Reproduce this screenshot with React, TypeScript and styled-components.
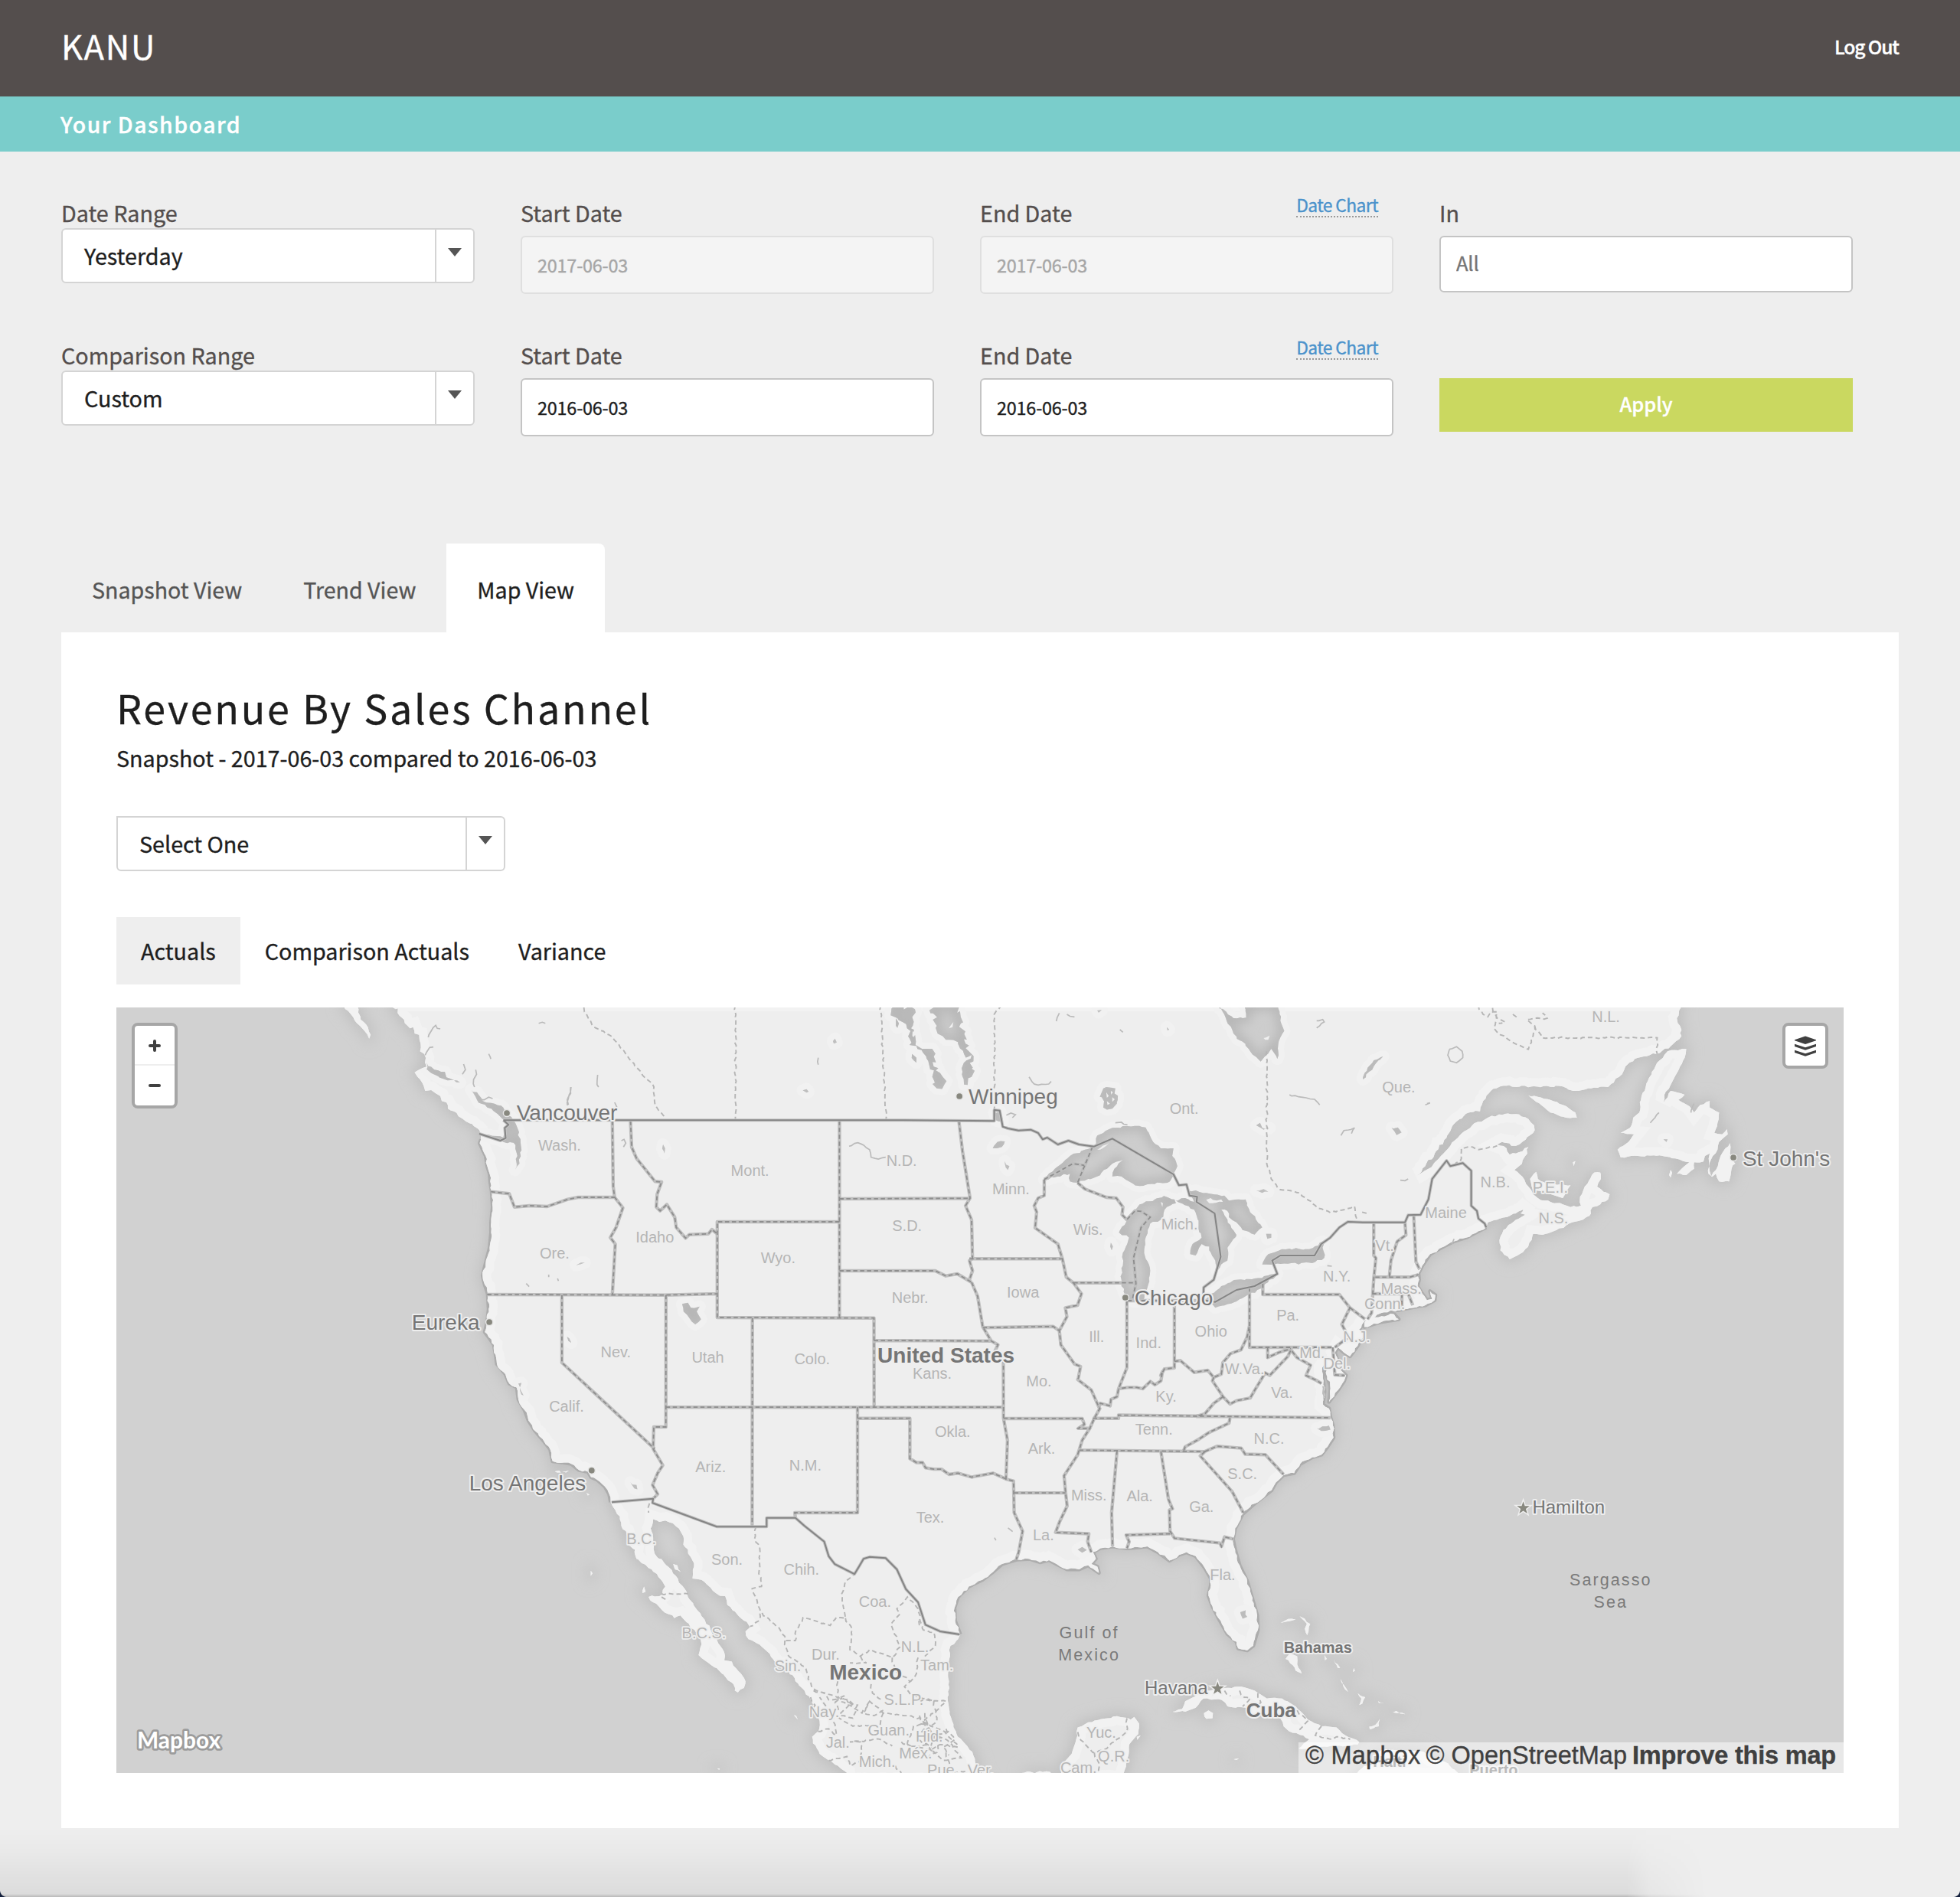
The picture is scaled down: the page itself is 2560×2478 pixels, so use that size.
import React from "react";
import styled, { createGlobalStyle, css } from "styled-components";

const GlobalStyle = createGlobalStyle`
  * { box-sizing: border-box; }
  body {
    margin: 0;
    background: #eeeeee;
    font-family: "Noto Sans CJK JP", "Noto Sans CJK SC", "Open Sans", sans-serif;
    font-size: 28.7px;
    color: #1e1e1e;
  }
`;

/* ---------- page chrome ---------- */

const Page = styled.div`
  position: relative;
  width: 2560px;
  height: 2478px;
  overflow: hidden;
  background: #eeeeee;
  -webkit-text-stroke: 0.35px currentColor;
`;

const Header = styled.header`
  display: flex;
  align-items: center;
  justify-content: space-between;
  height: 126px;
  padding: 0 80px 6px;
  background: #544e4d;
  color: #fff;
`;

const Brand = styled.div`
  font-size: 43.5px;
  letter-spacing: 1.8px;
  line-height: 60px;
`;

const LogOut = styled.a`
  font-size: 24.6px;
  font-weight: 500;
  letter-spacing: -1.1px;
  line-height: 40px;
`;

const TitleBar = styled.div`
  display: flex;
  align-items: center;
  height: 72px;
  padding: 0 79px 2px;
  background: #7acdcb;
  color: #fff;
  font-size: 28.4px;
  font-weight: 500;
  letter-spacing: 1.5px;
`;

/* ---------- filters ---------- */

const Filters = styled.form`
  display: grid;
  grid-template-columns: repeat(4, 540px);
  grid-auto-rows: 186px;
  column-gap: 60px;
  padding: 60px 80px 80px;
`;

const Field = styled.div`
  display: flex;
  flex-direction: column;
`;

const LabelRow = styled.div`
  display: flex;
  justify-content: space-between;
  align-items: flex-start;
  height: 40px;
  padding-right: 20px;
  line-height: 40px;
  color: #544e4d;
`;

const ChartLink = styled.a`
  margin-top: -6px;
  padding-top: 2px;
  line-height: 28px;
  font-size: 22.8px;
  letter-spacing: -0.6px;
  color: #4b92cb;
  border-bottom: 2px dotted #999;
`;

const SelectBox = styled.div<{ $width: number; $square?: boolean }>`
  display: flex;
  width: ${(p) => p.$width}px;
  height: 72px;
  border: 2px solid #d4d4d4;
  border-radius: ${(p) => (p.$square ? "0 6px 6px 6px" : "6px")};
  background: #fff;
`;

const SelectValue = styled.span`
  flex: 1;
  padding-left: 28px;
  line-height: 68px;
`;

const SelectArrow = styled.span`
  width: 50px;
  border-left: 2px solid #d4d4d4;
  padding: 24px 0 0 15px;
  &::before {
    content: "";
    display: block;
    width: 0;
    height: 0;
    border: 9.5px solid transparent;
    border-top: 11px solid #555;
    border-bottom: 0;
  }
`;

const TextInput = styled.input<{ $tall?: boolean }>`
  width: 100%;
  height: 76px;
  margin: 10px 0 0;
  padding: 0 20px;
  border: 2px solid #c4c4c4;
  border-radius: 6px;
  background: #fff;
  color: #1e1e1e;
  font-family: inherit;
  font-size: 23.4px;
  letter-spacing: -0.2px;
  &:disabled {
    background: #f4f4f4;
    border-color: #dfdfdf;
    color: #a6a6a6;
  }
  &::placeholder {
    color: #757575;
    opacity: 1;
  }
  ${(p) =>
    p.$tall &&
    css`
      height: 74px;
      padding-bottom: 5px;
      font-size: 25.6px;
    `}
`;

const ApplyButton = styled.button`
  height: 70px;
  margin-top: 50px;
  padding: 0 0 4px;
  border: 0;
  background: #cad860;
  color: #fff;
  font-family: inherit;
  font-size: 25.4px;
  font-weight: 500;
`;

/* ---------- tabs and panel ---------- */

const Tabs = styled.nav`
  display: flex;
  margin: 0 80px;
  height: 116px;
`;

const Tab = styled.a<{ $active?: boolean }>`
  padding: 3px 40px 0;
  line-height: 113px;
  font-size: 28.6px;
  color: ${(p) => (p.$active ? "#1e1e1e" : "#555")};
  background: ${(p) => (p.$active ? "#fff" : "transparent")};
  border-top-right-radius: 8px;
`;

const Panel = styled.section`
  margin: 0 80px;
  padding: 60px 72px 72px;
  background: #fff;
`;

const Heading = styled.h1`
  margin: 0;
  font-size: 52px;
  font-weight: 400;
  line-height: 76px;
  letter-spacing: 2.75px;
`;

const SubHeading = styled.p`
  margin: 8px 0 56px;
  line-height: 40px;
`;

const SubTabs = styled.div`
  display: flex;
  margin: 60px 0 30px;
`;

const SubTab = styled.a<{ $active?: boolean }>`
  padding: 0 32px;
  line-height: 88px;
  background: ${(p) => (p.$active ? "#eeeeee" : "transparent")};
`;

const BottomShade = styled.div`
  position: absolute;
  left: 0;
  bottom: 0;
  width: 2240px;
  height: 90px;
  background: linear-gradient(
    to bottom,
    rgba(0, 0, 0, 0) 0,
    rgba(0, 0, 0, 0.018) 30px,
    rgba(0, 0, 0, 0.075) 86px,
    rgba(0, 0, 0, 0.22) 90px
  );
  mask-image: linear-gradient(to right, #000 2125px, rgba(0, 0, 0, 0.4) 2155px, transparent 2230px);
`;

const Corner = styled.i<{ $side: "left" | "right" }>`
  position: absolute;
  bottom: 0;
  ${(p) => p.$side}: 0;
  width: 9px;
  height: 9px;
  background: radial-gradient(
    circle at ${(p) => (p.$side === "left" ? "100%" : "0%")} 0%,
    transparent 8.5px,
    #14203c 9.5px
  );
`;

/* ---------- map ---------- */

const MapFrame = styled.div`
  position: relative;
  width: 2256px;
  height: 1000px;
  background: #d1d1d1;
  overflow: hidden;
  font-family: "Liberation Sans", Arial, sans-serif;
`;

const MapSvg = styled.svg`
  display: block;
  -webkit-text-stroke: initial;
`;

const Control = styled.div<{ $side: "left" | "right" }>`
  position: absolute;
  top: 20px;
  ${(p) => p.$side}: 20px;
  width: 60px;
  border: 4px solid #a6a6a6;
  border-radius: 8px;
  background: #fff;
  overflow: hidden;
`;

const ControlButton = styled.div`
  display: flex;
  align-items: center;
  justify-content: center;
  height: 52px;
  &:not(:last-child) {
    border-bottom: 2px solid #eee;
    padding-top: 2px;
  }
`;

const Attribution = styled.div`
  position: absolute;
  right: 0;
  bottom: 0;
  display: flex;
  gap: 7px;
  width: 712px;
  height: 40px;
  padding-left: 9px;
  line-height: 34px;
  white-space: nowrap;
  background: rgba(255, 255, 255, 0.5);
  color: #404040;
  font-size: 32.5px;
`;

const AttributionLink = styled.a<{ $bold?: boolean; $track: number }>`
  font-weight: ${(p) => (p.$bold ? 700 : 400)};
  letter-spacing: ${(p) => p.$track}px;
`;

type Pt = [number, number];

/* Survey sheets: each has its own origin and units per pixel. */
const sheets = {
  A: [150, 1310, 2.529, 3],
  B: [600, 1310, 2.613, 3],
  C: [1180, 1310, 2.529, 3],
  D: [1780, 1310, 2.45, 3],
  E: [600, 1790, 2.529, 2.904],
  F: [1200, 1790, 2.529, 2.904],
  G: [1680, 1900, 2.119, 3],
} as const;
type Sheet = keyof typeof sheets;

const at = (s: Sheet, x: number, y: number): Pt => {
  const [ox, oy, sx, sy] = sheets[s];
  return [ox + x / sx - 152, oy + y / sy - 1316];
};

/* "B 10,20 30,40 C 5,6" -> map points; a letter switches the sheet. */
const trace = (src: string): Pt[] => {
  let sheet: Sheet = "A";
  const out: Pt[] = [];
  src
    .trim()
    .split(/\s+/)
    .forEach((tok) => {
      if (tok in sheets) sheet = tok as Sheet;
      else {
        const [x, y] = tok.split(",").map(Number);
        out.push(at(sheet, x, y));
      }
    });
  return out;
};

/* Deterministic small-scale wobble for natural shorelines. */
const roughen = (pts: Pt[], amount: number, closed: boolean): Pt[] => {
  let seed = 7;
  const rnd = () => {
    seed = (seed * 16807) % 2147483647;
    return seed / 2147483647 - 0.5;
  };
  const out: Pt[] = [];
  const n = closed ? pts.length : pts.length - 1;
  for (let i = 0; i < n; i++) {
    const a = pts[i];
    const b = pts[(i + 1) % pts.length];
    const len = Math.hypot(b[0] - a[0], b[1] - a[1]);
    out.push(a);
    if (len > 300) continue;
    const steps = Math.floor(len / 4);
    for (let k = 1; k < steps; k++) {
      const t = k / steps;
      out.push([
        a[0] + (b[0] - a[0]) * t + rnd() * amount,
        a[1] + (b[1] - a[1]) * t + rnd() * amount,
      ]);
    }
  }
  if (!closed) out.push(pts[pts.length - 1]);
  return out;
};

const toPath = (pts: Pt[], closed: boolean) =>
  "M" + pts.map(([x, y]) => `${x.toFixed(1)} ${y.toFixed(1)}`).join("L") + (closed ? "Z" : "");

const area = (src: string, rough = 2) => toPath(roughen(trace(src), rough, true), true);
const line = (src: string, rough = 0) => toPath(rough ? roughen(trace(src), rough, false) : trace(src), false);

const canadaWest = `
A 918,0 918,18 928,25 935,22 940,50 955,65 958,80 975,100 985,95 990,120 1005,125 1010,160 1008,190 1022,200
1027,215 1025,235 1030,250 1018,255 1005,262 990,272 1000,290 1008,300 1020,325 1025,345 1045,342 1060,355 1075,365
1080,385 1095,390 1100,415 1120,425 1135,445 1160,465 1180,475 1205,500`;

const usWest = `
A 1210,535 1205,550 1215,575 1225,600
1230,640 1238,670 1240,700 1245,740 1248,800 1243,860 1243,900 1238,960 1225,1020 1215,1070 1222,1105 1232,1140
1235,1200 1230,1250 1222,1290 1235,1310 1252,1340 1258,1380 1262,1415 1290,1455
E 165,50 190,65 195,110 215,150 228,190 250,230 280,270 300,300 308,345 345,350 370,355 395,378 425,385 435,405
455,415 480,440 495,470 500,500`;

const mexico = `
E 515,530 530,555 535,590 550,610 555,660 580,680 585,715 610,735 635,755 670,800
680,820 670,850 625,860 630,872 650,885 670,910 710,940 730,930 750,955 790,1000 800,1040 790,1080 810,1100
850,1130 880,1165 905,1190 910,1215 920,1222 940,1205 945,1180 930,1150 905,1120 900,1105 875,1100 875,1070
855,1035 830,985 810,945 790,915 755,860 745,830 725,805 715,780 690,745 645,695 640,650 632,600 640,565 660,575
680,570 705,580 725,600 735,620 745,670 765,710 775,745 770,790 800,795 830,825 860,855 878,857 885,890 910,915
930,940 955,965 960,975 945,990 955,1020 975,1030 1000,1050 1025,1075 1045,1110 1080,1130 1110,1180 1140,1215
1160,1250 1180,1290 1190,1330 1185,1370 1165,1390 1168,1415 1190,1455 1220,1480 1250,1500 1280,1527 1290,1560
F 215,1560 195,1527 180,1460 160,1425 125,1380 110,1330 100,1280 95,1240 100,1180 100,1100 105,1045 130,1020`;

const usGulfEast = `
F 137,1002
120,950 118,900 130,860 165,820 210,795 245,765 275,735 325,718 365,715 400,728 430,720 455,735 490,755 530,755
560,740 595,768 590,745 570,735 585,715 575,690 600,675 640,668 690,675 755,668 790,690 828,722 860,700 885,690
915,705 945,750 965,790 965,815 957,855 970,895 990,940 1020,1000 1050,1030 1055,1055 1085,1062 1105,1045
1120,985 1118,930 1095,840 1085,800 1060,740 1045,680 1038,640 1045,600 1070,545 1110,505 1165,455 1180,425
1205,397 1240,390 1260,355 1300,330 1330,320 1350,290 1370,255 1368,210 1360,180 1355,145 1335,130 1340,80 1335,30
C 1383,1430 1395,1400 1395,1450 1410,1500
F 1360,70 1355,120 1385,75 1405,40
C 1462,1460 1445,1440 1425,1370 1435,1350 1455,1370 1475,1385 1500,1345 1520,1300 1505,1280 1530,1240
D 5,1270 60,1250 115,1240 100,1220 60,1228 25,1236 60,1215 130,1200 180,1188 200,1185 230,1165 232,1145 215,1130
222,1160 205,1165 190,1140 175,1110 180,1085 178,1060 190,1030 215,985 250,960 290,935 330,920 370,895 395,880`;

const canadaEast = `
D 400,860 430,850 470,835 520,805 530,785 505,825 520,830 490,850 450,890 437,930 440,970 470,1005 495,990 520,965
540,930 545,905 585,905 620,890 660,865 690,855 725,835 735,800 760,790 785,770 790,750 770,740 750,720 762,690
760,665 740,665 710,720 695,760 698,795 665,800 640,790 580,775 560,765 545,750 530,720 510,680 485,655 500,640
520,600 530,565 490,590 470,595 460,570 430,555 445,545 490,560 510,545 545,510 548,480 530,455 500,437 455,435
400,450 350,480 310,520 280,560 250,600 210,650 170,678 200,640 230,590 270,520 300,465 340,430 375,425 385,385
410,345 450,325 540,328 640,328 680,345 730,335 785,330 820,290 840,250 880,215 940,200 985,170 1020,130 1015,90
1005,60 1018,18 1018,0`;

const mainland = canadaWest + usWest + mexico + usGulfEast + canadaEast;

const islands = [
  "A 755,10 780,45 800,80 825,110 840,140 845,125 830,85 812,65 800,10",
  "D 530,362 560,368 600,380 640,400 680,430 685,450 650,450 600,430 570,400 545,378",
  `D 1000,185 1035,180 1030,215 1015,250 990,310 965,360 962,390 985,345 1030,360 1010,380 1045,405 1060,430
   1080,400 1110,385 1110,410 1140,430 1135,470 1125,510 1150,515 1165,495 1168,515 1140,545 1135,575 1120,600
   1108,640 1110,660 1115,680 1130,655 1145,600 1160,570 1175,550 1175,590 1185,620 1192,630 1180,650 1172,700
   1140,700 1130,670 1118,682 1106,670 1108,625 1110,590 1095,600 1090,622 1060,625 1060,650 1035,675 1005,670
   1020,650 1045,625 1000,610 950,598 880,600 825,605 815,575 850,545 868,515 825,510 855,490 865,450 885,430
   890,380 905,330 925,270 950,225 975,190`,
  "D 535,690 555,662 560,690 590,710 665,715 650,745 640,765 615,755 580,740 545,735",
  `F 838,1295 870,1285 880,1255 930,1225 960,1215 1010,1205 1065,1200 1110,1215 1150,1245 1200,1245 1245,1275
   1285,1325 1330,1350 1380,1355 1410,1385 1455,1410 1450,1420 1255,1435 1290,1400 1270,1385 1235,1375 1205,1350
   1190,1310 1100,1300 1080,1280 1020,1275 1000,1250 940,1245 915,1280 880,1295`,
  "F 942,1300 957,1290 972,1300 970,1320 950,1322",
  "F 1195,958 1220,943 1245,945 1215,953",
  "F 1258,933 1275,942 1293,962 1283,1005 1275,980 1282,962",
  "F 1212,1095 1225,1075 1250,1085 1250,1115 1265,1150 1245,1140 1235,1118",
  "F 1340,1080 1348,1095 1342,1100",
  "F 1370,1095 1392,1128 1384,1130",
  "F 1437,1130 1441,1140 1434,1144",
  "F 1393,1170 1418,1220 1408,1210",
  "F 1450,1225 1475,1240 1465,1265 1455,1270 1462,1245",
  "F 1517,1255 1540,1262 1520,1262",
  "F 1523,1322 1520,1350 1490,1362 1488,1352 1508,1345",
  "F 470,1550 475,1490 505,1455 520,1400 525,1355 560,1335 655,1312 700,1325 712,1315 728,1340 725,1380 695,1420 690,1470 672,1550",
  "F 720,1390 733,1385 722,1402",
  "F 340,1527 360,1522 380,1527",
  "F 385,1527 400,1520 435,1524 438,1535",
  "G 190,1260 215,1220 245,1215 240,1180 270,1155 330,1160 380,1165 400,1190 440,1205 485,1260",
  "E 706,735 720,740 732,765 712,755",
  "E 434,760 440,770 434,780",
  "E 610,820 615,840 605,845",
  "E 315,383 330,380 335,388",
  "E 340,383 362,380 352,388",
  "E 420,465 430,472 424,475",
  "D 985,655 990,665 985,685 980,675",
  "D 672,625 680,620 675,640",
  "G 295,1010 305,1005 315,1015 330,1018 320,1012",
  "E 852,1510 860,1510 858,1516",
  "E 1105,1308 1112,1310 1118,1325",
  "F 1040,1475 1058,1472 1050,1478",
];

const lakes = [
  `C 465,692 500,650 550,600 600,575 630,560 640,520 660,510 690,490 740,483 800,488 825,545 850,570 892,570
   888,600 905,640 890,680 880,700 830,710 780,718 745,700 720,680 690,680 710,630 725,615 690,630 640,680
   610,690 575,705 550,700 550,670 510,680`,
  `C 712,900 735,860 750,830 780,790 830,770 860,757 895,770 900,785 870,800 850,850 815,865 800,920 795,980
   815,1050 805,1120 790,1165 760,1170 735,1150 720,1110 720,1040 730,970 745,920`,
  `C 900,775 930,765 960,780 940,735 1000,745 1060,755 1075,775 1130,770 1145,820 1185,880 1160,908 1120,890
   1100,860 1075,840 1070,815 1050,810 1080,870 1100,910 1070,960 1070,1010 1035,1050 1025,1000 1010,955
   985,945 965,990 947,985 955,945 985,920 975,870 960,810`,
  "C 1000,1160 1050,1110 1100,1085 1160,1080 1235,1062 1180,1120 1100,1170 1030,1195",
  "C 1185,1025 1205,985 1250,965 1340,965 1385,935 1390,1000 1350,1020 1270,1022 1200,1025",
  "C 1040,10 1090,60 1132,58 1125,10 1240,10 1245,70 1258,110 1240,150 1235,220 1215,180 1180,230 1140,180 1090,120 1065,60",
  "C 300,430 320,425 328,465 305,460",
  "C 295,570 310,545 335,543 325,565",
  "B 760,1180 780,1175 790,1195 820,1190 810,1210 825,1240 805,1260 785,1235 765,1210",
  "B 40,340 60,350 80,385 120,395 150,410 165,440 185,460 198,490 210,560 205,630 190,655 198,600 185,548 150,545 70,515 100,517 150,528 155,490 160,460 130,435 95,410 60,380",
  "A 1030,235 1055,262 1090,270 1095,292 1140,312 1085,298 1045,275 1030,260",
  "F 1062,918 1080,910 1085,935 1070,942",
  "F 525,680 540,670 555,682 540,692",
  "F 1333,60 1342,60 1345,130 1335,125",
  "F 1315,220 1355,210 1360,225 1330,230",
  "E 565,425 585,435 588,452 578,448",
  "D 92,490 112,488 124,508 108,518",
  "D 0,300 15,255 35,225 65,210 40,240 20,270",
  "C 1165,735 1190,730 1205,740 1185,745",
  "C 1198,905 1215,905 1215,920 1202,925",
  "C 1165,480 1178,470 1185,490 1210,490 1190,497",
  "B 1275,150 1282,140 1288,155 1278,160",
  "B 1172,343 1185,338 1192,348 1185,352",
  "B 1545,200 1560,215 1560,235 1550,225",
  "B 1490,60 1500,80 1495,98",
  "B 695,555 702,570 700,590 697,580",
  "B 367,1308 375,1315 382,1332 372,1325",
  "B 398,1028 415,1018 428,1018 415,1024",
  "C 685,940 692,955 688,970 683,955",
  "C 335,620 350,640 345,655 338,645",
  "D 962,535 975,535 972,545",
  "E 195,50 205,48 202,75 212,95 205,92",
  "C 640,30 655,28 645,38",
  "C 870,95 878,105 872,108",
];

/* Lakes with ragged, island-strewn shores. */
const raggedLakes = [
  "C 85,25 110,10 175,10 190,80 205,160 230,230 225,290 200,320 195,270 200,200 180,160 140,145 110,90",
  "C 0,10 38,25 30,60 25,100 40,165 65,180 95,180 100,250 130,290 135,320 110,335 95,290 75,210 60,185 20,165 12,100 -20,60 -40,30",
  "C 655,370 670,330 700,335 705,390 690,415 660,410",
];

const lakeIslands = [
  "C 640,575 680,548 670,560 650,575",
  "C 1190,138 1210,128 1205,145 1195,145",
  "C 1000,772 1015,765 1035,775 1050,770 1055,780 1010,785",
  "C 850,780 857,785 855,800",
  "C 150,100 165,75 162,95",
  "C 670,350 678,365 672,372",
  "C 685,345 692,350 686,360",
  "C 690,370 698,378 690,388",
  "C 672,385 682,395 674,400",
  "C 205,215 225,205 222,218 208,226",
  "C 30,110 38,125 34,135",
];

const streams = [
  "A 1035,135 1045,110 1060,88 1065,100 1075,102",
  "A 1025,205 1040,175 1052,173",
  "A 1148,280 1158,262 1152,240",
  "A 1188,330 1185,300 1195,280 1192,262",
  "A 1200,375 1220,380 1235,370 1248,375",
  "A 1235,200 1240,212 1242,220",
  "A 1495,402 1498,375 1505,350 1507,330",
  "B 372,400 368,380 380,355 380,330",
  "B 475,330 470,305 472,282",
  "B 530,390 538,410",
  "B 1330,562 1360,548 1380,558 1400,575 1405,605 1430,612 1455,605",
  "B 553,540 562,535 568,550 560,565",
  "B 1225,215 1225,242",
  "C 415,290 425,310 445,322 480,318 488,308",
  "C 700,470 720,468 740,478",
  "C 340,440 355,432 370,438 360,450",
  "C 1365,70 1385,65 1390,75 1365,98",
  "C 1445,520 1455,500 1470,498 1490,490 1480,512",
  "C 1275,360 1305,368 1330,372 1358,378 1375,400",
  "C 515,40 505,72",
  "C 540,45 565,55",
  "C 715,105 725,115",
  "C 1400,1030 1415,1032",
  "D 277,182 300,172 318,190 320,215 300,235 280,228 272,205 277,182",
  "D 120,695 135,697 145,690",
  "D 205,395 215,392 200,400",
  "D 920,470 935,450 948,430",
  "D 285,945 292,925",
  "D 1050,430 1060,395",
  "F 295,598 310,612",
  "F 250,635 255,645",
  "A 1400,80 1412,76 1422,80",
  "B 305,1065 305,1075",
  "B 335,1080 338,1090",
  "B 228,1100 238,1112",
];

const nations = [
  `B 150,460 1297,460 C 0,460 300,463 300,420 318,422 328,485 345,492 380,500 420,497 445,510 460,535 475,528 510,555
   545,540 580,555 630,563 690,532 892,672 910,715 935,712 945,755 970,760 968,780 1028,825 1048,995 1025,1085
   992,1115 990,1165 1030,1172 1100,1125 1160,1110 1235,1062 1218,1010 1245,990 1358,990 1380,945 1410,920
   1440,880 1468,858 D 0,860 135,860 145,832 185,830 210,770 222,690 268,618 280,640 320,628 347,658 347,795
   365,815 370,845 390,865 395,880`,
  "B 68,513 140,540 158,530 155,490 168,478 150,460",
  `E 503,500 640,487 638,503 850,593 1015,593 1015,560 1110,560 1140,590 1205,650 1220,705 1240,735 1305,773
   1320,745 1335,715 1355,708 1408,712 1445,755 1475,830 1515,880 F 22,965 70,990 135,1002`,
];

const states = [
  "B 108,740 170,748 188,800 240,795 300,798 370,770 405,762 530,762",
  "B 522,463 525,720 530,762 558,803 535,880 515,920 532,945 522,1143",
  "B 95,1143 700,1145 880,1140",
  "B 584,463 588,565 605,610 668,700 690,702 675,750 672,800 685,815 708,790 735,840 740,880 772,922 785,908 850,905 862,888 880,905",
  "B 1297,858 880,858 880,1233 1415,1235 E 1370,140",
  "B 1297,463 1297,1235",
  "B 1297,768 C 220,766",
  "B 1297,1050 C 105,1050 140,1070 178,1062 225,1095",
  "B 350,1145 350,1410 E 645,298",
  "B 705,1145 E 682,215 642,215 640,298 672,360 655,390 638,435 655,470 640,487",
  "B 1000,1235 E 967,593",
  "E 682,140 F 280,140",
  "B 1415,1323 C 290,1325",
  "E 1315,140 1315,540 1108,540 1110,560",
  "E 1315,182 1488,182 1488,335 1510,350 1530,350 1540,370 F 50,375 75,375 100,395 130,390 175,405 245,390 290,413",
  "C 225,1095 245,1150 262,1270 290,1325 312,1340 300,1370 330,1400 F 280,182 293,265 288,413 313,420 315,540 343,610 330,690 322,718",
  "C 183,463 195,580 220,765 205,795 225,850 228,1003 218,1010 228,1050 218,1085",
  "C 218,1003 525,1003",
  `C 465,692 465,755 445,765 432,795 440,820 435,882 510,945 525,1003 538,1075 562,1098 588,1140 575,1185 535,1195
   540,1230 515,1285 520,1340 565,1415 585,1425 578,1470 F 525,35 570,75 595,140 598,145 580,182 565,220 540,265
   525,320 480,400 485,465 490,515 465,575 452,615 562,620 558,650 570,690`,
  "C 262,1273 495,1268 515,1285",
  "C 562,1097 770,1097",
  "C 575,705 600,730 670,762 703,765 725,800 722,830 738,850 765,815 785,817 815,840 785,880 760,1000 768,1100 755,1168",
  "C 465,692 560,630 597,637",
  "C 625,563 575,705",
  "C 738,1170 738,1430 F 660,70 655,100 635,110 632,135 600,125 595,140",
  "C 740,1167 1000,1167",
  "C 895,1170 895,1430 862,1435 850,1460 F 805,5 800,40 780,55 765,42 740,70 720,65 690,65 660,70",
  "C 895,1405 915,1402 960,1448 1005,1440 1025,1468 1050,1455 1055,1410 1080,1375 1115,1360 1135,1310 1143,1265",
  "C 1143,1115 1143,1350 1415,1350",
  "C 1187,1100 1187,1143 1440,1143 1475,1195 1448,1260 1470,1310 1425,1350",
  "C 1475,1195 1525,1240",
  "C 1025,1468 F 970,40 1005,100 1028,128 1050,115 1095,105 1110,75 C 1195,1450 1210,1460 1270,1385 1280,1360 1300,1390 1345,1420 1330,1460 1365,1480 F 1330,50",
  "F 1005,100 975,125 945,165 915,175",
  "C 1203,1350 1203,1390 1240,1370 1280,1355",
  "C 1418,1350 1425,1458 1458,1460",
  "F 575,182 660,182 660,170 800,172 1360,180",
  "F 1028,180 1025,200 960,235 920,265 880,290 875,305",
  "F 530,303 945,308",
  "F 280,182 540,183 547,205 527,220 568,220",
  "F 315,465 485,465",
  "F 655,305 637,540 640,668",
  "F 800,308 825,490 838,525 828,530 830,610 845,637 995,655 1000,668 1010,632 1038,640",
  "F 830,620 685,625 695,650 688,675",
  "F 945,308 930,325 1035,460 1072,540",
  "F 945,308 985,288 1065,295 1078,318 1145,320 1205,395",
  "D 35,860 35,990 42,1000 35,1080 28,1215 15,1240",
  "D 135,862 138,910 110,935 90,1010 85,1072",
  "D 163,835 170,1015 182,1045",
  "D 40,1075 150,1075 178,1065",
  "D 30,1140 145,1140 160,1185",
  "D 125,1140 125,1205",
];

const provinces = [
  "B 425,18 440,60 460,95 510,125 545,165 580,220 635,295 660,320 668,400 702,455",
  "B 942,10 942,455",
  "B 1438,10 1445,200 1456,455",
  "C 325,10 300,45 300,420",
  "C 1200,190 1200,630 1215,690 1245,732 1310,745 1370,805 1410,822 1490,797 1497,845",
  "C 1515,820 1530,825",
  "D 370,10 385,45 400,55 410,35 430,35 420,100 440,125 480,155 530,182 545,130 550,90 525,65 590,60 575,40",
  "D 415,20 430,60 455,75 435,80",
  "D 550,90 575,137 942,137 942,200",
  "D 480,45 495,58",
  "D 430,560 370,575 340,563 315,570 312,620 280,640",
  "E 628,505 625,540",
  "E 668,848 755,848",
  "E 668,860 685,872",
  "E 980,593 975,640 992,670 990,760 998,820 967,828 995,915 990,950 960,972",
  "E 1000,920 1060,985 1080,1025 1110,1025 1112,985 1135,938 1225,968 1245,938 1275,940 1262,850 1275,800 1305,773",
  "E 1275,940 1297,980 1290,1060 1325,1085 1355,1060 1430,1090 1455,1050 1425,965 1455,925 1445,905 1480,860 1515,905 1530,975",
  "E 1075,1025 1085,1080 1140,1125 1165,1205 1190,1220 1280,1250 1300,1280",
  "E 1325,1085 1345,1110 1290,1110",
  "E 1250,1180 1250,1250 1300,1280 1330,1300 1355,1255 1400,1300 1470,1310 1540,1325",
  "E 1430,1090 1440,1140 1490,1180 1470,1200 1490,1230 1568,1255",
  "E 1360,1190 1365,1225 1395,1250",
  "E 1515,1090 1510,1150 1490,1180",
  "E 1185,1370 1220,1360 1245,1385 1235,1320 1190,1240",
  "E 1220,1480 1280,1465 1290,1500 1330,1480 1325,1410 1290,1410 1390,1400 1430,1425",
  "E 1400,1300 1390,1345 1300,1350 1240,1310",
  "E 1240,1260 1270,1235 1290,1265 1260,1300 1240,1260",
  "E 1290,1255 1315,1270 1300,1320 1260,1310",
  "E 1355,1255 1335,1300 1370,1310 1400,1290",
  "E 1160,1240 1175,1270 1165,1290",
  "E 1170,1215 1205,1225 1220,1250 1265,1245",
  "E 1480,1420 1500,1350 1540,1340 1568,1390 1550,1440 1480,1420",
  "E 1520,1310 1540,1350 1510,1400 1560,1430",
  "E 1460,1410 1500,1430 1540,1420 1568,1450",
  "E 1440,1500 1460,1527",
  "F 0,950 15,985 50,995 55,1045 20,1085",
  "F 0,1250 90,1255 60,1290 10,1330 40,1350 85,1370 130,1430 70,1420 40,1440 80,1480 140,1470 110,1420 60,1380 100,1370",
  "F 20,1300 30,1345 0,1340",
  "F 50,1255 60,1330 20,1370 70,1390 60,1450 20,1470",
  "F 90,1360 120,1400 80,1430 100,1460",
  "F 90,1450 110,1527 160,1520",
  "F 688,1320 688,1370 610,1440 575,1450 530,1395 525,1370",
  "F 580,1450 595,1490 595,1527",
  "F 1010,1215 1030,1235",
  "F 1060,1215 1075,1240 1095,1245 1070,1275",
  "F 1120,1225 1130,1260 1115,1275",
  "F 1250,1290 1285,1330 1250,1370",
  "F 1330,1350 1310,1385 1365,1400 1380,1390 1425,1400",
];

type LabelSpec = [string, Sheet, number, number];

const stateLabels: LabelSpec[] = [
  ["Wash.", "B", 342, 580], ["Ore.", "B", 325, 1002], ["Mont.", "B", 992, 678], ["Idaho", "B", 667, 940],
  ["Wyo.", "B", 1088, 1020], ["Nev.", "B", 534, 1388], ["Utah", "B", 848, 1410], ["Colo.", "B", 1204, 1416],
  ["N.D.", "C", -6, 640], ["S.D.", "C", 12, 895], ["Nebr.", "C", 22, 1177], ["Minn.", "C", 355, 750],
  ["Wis.", "C", 610, 908], ["Mich.", "C", 912, 887], ["Iowa", "C", 395, 1155], ["Ill.", "C", 638, 1330],
  ["Ind.", "C", 810, 1352], ["Ohio", "C", 1016, 1308], ["Pa.", "C", 1270, 1245], ["N.Y.", "C", 1432, 1093],
  ["Ont.", "C", 927, 435], ["N.J.", "C", 1497, 1330], ["Md.", "C", 1350, 1392], ["Del.", "C", 1432, 1433],
  ["W.Va.", "C", 1127, 1455], ["Kans.", "C", 95, 1473], ["Mo.", "F", 397, 62],
  ["N.L.", "D", 778, 75], ["Que.", "D", 115, 350], ["N.B.", "D", 424, 722], ["P.E.I.", "D", 600, 745],
  ["N.S.", "D", 610, 863], ["Maine", "D", 266, 843], ["Vt.", "D", 70, 972], ["Mass.", "D", 123, 1140],
  ["Conn.", "D", 70, 1200],
  ["Calif.", "E", 354, 157], ["Ariz.", "E", 830, 387], ["N.M.", "E", 1143, 380], ["B.C.", "E", 601, 658],
  ["Son.", "E", 884, 738], ["Chih.", "E", 1130, 775], ["Coa.", "E", 1373, 898], ["B.C.S.", "E", 808, 1017],
  ["Sin.", "E", 1085, 1141], ["Dur.", "E", 1210, 1098], ["N.L.", "E", 1505, 1070], ["Nay.", "E", 1205, 1315],
  ["S.L.P.", "E", 1468, 1270], ["Guan.", "E", 1418, 1385], ["Jal.", "E", 1250, 1433], ["Mich.", "E", 1380, 1505],
  ["Méx.", "E", 1507, 1473], ["Hid.", "F", 35, 1407], ["Tam.", "F", 60, 1138], ["Pue.", "F", 80, 1535],
  ["Ver.", "F", 205, 1535],
  ["Okla.", "F", 112, 253], ["Tex.", "F", 38, 577], ["Ark.", "F", 406, 316], ["Tenn.", "F", 777, 243],
  ["Ky.", "F", 817, 118], ["Va.", "F", 1200, 105], ["N.C.", "F", 1157, 280], ["S.C.", "F", 1069, 411],
  ["Miss.", "F", 562, 495], ["Ala.", "F", 730, 497], ["Ga.", "F", 934, 538], ["La.", "F", 412, 645],
  ["Fla.", "F", 1004, 796], ["Yuc.", "F", 603, 1395], ["Q.R.", "F", 644, 1485], ["Cam.", "F", 528, 1527],
];

const StateName = styled.text`
  font-size: 20px;
  fill: #b5b5b5;
  stroke: #eeeeee;
  stroke-width: 3.4px;
  stroke-linejoin: round;
  paint-order: stroke;
  text-anchor: middle;
`;

const CityName = styled.text<{ $size?: number; $bold?: boolean }>`
  font-size: ${(p) => p.$size ?? 28}px;
  font-weight: ${(p) => (p.$bold ? 700 : 400)};
  fill: #757575;
  stroke: #eeeeee;
  stroke-width: 4px;
  stroke-linejoin: round;
  paint-order: stroke;
`;

const SeaName = styled.text`
  font-size: 21.5px;
  letter-spacing: 2.1px;
  fill: #7a7a7a;
  text-anchor: middle;
`;

const Wordmark = styled.text`
  font-family: Lato, sans-serif;
  font-size: 31px;
  font-weight: 700;
  fill: #fff;
  stroke: #9c9c9c;
  stroke-width: 5.5px;
  stroke-linejoin: round;
  paint-order: stroke;
`;

type CitySpec = [string, Sheet, number, number, { size?: number; bold?: boolean; end?: boolean }?];

const cities: CitySpec[] = [
  ["Vancouver", "B", 195, 460],
  ["Winnipeg", "C", 215, 395],
  ["Chicago", "C", 763, 1184],
  ["St John's", "D", 1215, 638],
  ["Eureka", "A", 1205, 1280, { end: true }],
  ["Los Angeles", "E", 32, 456],
  ["Havana", "F", 746, 1227, { size: 24 }],
  ["Hamilton", "G", 681, 232, { size: 24 }],
  ["United States", "B", 1427, 1410, { size: 28, bold: true }],
  ["Mexico", "E", 1222, 1172, { bold: true }],
  ["Cuba", "F", 1082, 1316, { size: 26, bold: true }],
  ["Bahamas", "F", 1206, 1071, { size: 20, bold: true }],
  ["Haiti", "G", 240, 1225, { size: 20, bold: true }],
  ["Puerto", "G", 507, 1257, { size: 20, bold: true }],
];

const dots: [Sheet, number, number][] = [
  ["B", 162, 432], ["C", 185, 366], ["C", 733, 1155], ["D", 1186, 606], ["A", 1237, 1251], ["E", 437, 380],
];

const starPath = (cx: number, cy: number, r: number) => {
  const pts: Pt[] = [];
  for (let i = 0; i < 10; i++) {
    const a = -Math.PI / 2 + (i * Math.PI) / 5;
    const k = i % 2 ? r * 0.4 : r;
    pts.push([cx + k * Math.cos(a), cy + k * Math.sin(a)]);
  }
  return toPath(pts, true);
};

const landPath = [area(mainland, 2.8), ...islands.map((s) => area(s, 2))].join("");
const lakePath = [...lakes.map((s) => area(s, 3)), ...raggedLakes.map((s) => area(s, 9))].join("");
const lakeIslandPath = lakeIslands.map((s) => area(s, 2)).join("");
const coastPath = line(usWest) + line(usGulfEast);
const streamPath = streams.map((s) => line(s, 2)).join("");
const statePath = states.map((s) => line(s)).join("");
const nationPath = nations.map((s) => line(s)).join("");
const provincePath = provinces.map((s) => line(s, 2.5)).join("");

const BaseMap = () => (
  <MapSvg width={2256} height={1000} viewBox="0 0 2256 1000">
    <defs>
      <filter id="shore" x="-5%" y="-5%" width="110%" height="110%">
        <feGaussianBlur stdDeviation="9" />
      </filter>
      <filter id="soft" x="-5%" y="-5%" width="110%" height="110%">
        <feGaussianBlur stdDeviation="7" />
      </filter>
      <clipPath id="landClip">
        <path d={landPath} />
      </clipPath>
      <clipPath id="lakeClip">
        <path d={lakePath} />
      </clipPath>
    </defs>

    <path d={landPath} fill="#bebebe" stroke="#bebebe" strokeWidth={8} filter="url(#shore)" />
    <path d={coastPath} fill="none" stroke="#adadad" strokeWidth={5} strokeLinejoin="round" />
    <path d={landPath} fill="#eeeeee" />
    <g clipPath="url(#landClip)">
      <path d={landPath} fill="none" stroke="#f2f2f2" strokeWidth={22} />
      <path d={lakePath} fill="#f1f1f1" stroke="#f1f1f1" strokeWidth={16} strokeLinejoin="round" />
      <path d={lakePath} fill="#cdcdcd" />
      <g clipPath="url(#lakeClip)">
        <path d={lakePath} fill="none" stroke="#b6b6b6" strokeWidth={12} filter="url(#soft)" />
      </g>
      <path d={lakeIslandPath} fill="#f0f0f0" />
    </g>
    <path d={streamPath} fill="none" stroke="#bababa" strokeWidth={1.7} />

    <path d={provincePath} fill="none" stroke="#b5b5b5" strokeWidth={1.9} strokeDasharray="6 4" />
    <path d={statePath} fill="none" stroke="#bfbfbf" strokeWidth={4.4} strokeLinejoin="round" />
    <path d={statePath} fill="none" stroke="#8e8e8e" strokeWidth={1.8} strokeDasharray="5.5 3.5" />
    <path d={nationPath} fill="none" stroke="#c4c4c4" strokeWidth={4} strokeLinejoin="round" />
    <path d={nationPath} fill="none" stroke="#858585" strokeWidth={2} strokeLinejoin="round" />

    {stateLabels.map(([name, sheet, x, y], i) => {
      const [px, py] = at(sheet, x, y);
      return (
        <StateName key={i} x={px} y={py}>
          {name}
        </StateName>
      );
    })}

    <SeaName x={at("F", 563, 0)[0]} y={at("F", 0, 1017)[1]}>Gulf of</SeaName>
    <SeaName x={at("F", 563, 0)[0]} y={at("F", 0, 1102)[1]}>Mexico</SeaName>
    <SeaName x={at("G", 898, 0)[0]} y={at("G", 0, 512)[1]}>Sargasso</SeaName>
    <SeaName x={at("G", 898, 0)[0]} y={at("G", 0, 601)[1]}>Sea</SeaName>

    {dots.map(([sheet, x, y], i) => {
      const [px, py] = at(sheet, x, y);
      return <circle key={i} cx={px} cy={py} r={4.6} fill="#88887f" stroke="#e6e6e6" strokeWidth={1.5} />;
    })}
    {cities.map(([name, sheet, x, y, o = {}]) => {
      const [px, py] = at(sheet, x, y);
      return (
        <CityName key={name} x={px} y={py} $size={o.size} $bold={o.bold} textAnchor={o.end ? "end" : "start"}>
          {name}
        </CityName>
      );
    })}
    {([["F", 987, 1207], ["G", 656, 210]] as [Sheet, number, number][]).map(([s, x, y]) => (
      <path
        key={s}
        d={starPath(...at(s, x, y), 8.8)}
        fill="#88887f"
        stroke="#eee"
        strokeWidth={3}
        paintOrder="stroke"
      />
    ))}

    <Wordmark x={27} y={968} textLength={109} lengthAdjust="spacingAndGlyphs">
      Mapbox
    </Wordmark>
  </MapSvg>
);

const Plus = () => (
  <svg width={16} height={16} viewBox="0 0 16 16">
    <path d="M8 2v12M2 8h12" stroke="#404040" strokeWidth={4} strokeLinecap="round" />
  </svg>
);

const Minus = () => (
  <svg width={16} height={16} viewBox="0 0 16 16">
    <path d="M2 8h12" stroke="#404040" strokeWidth={4} strokeLinecap="round" />
  </svg>
);

const Layers = () => (
  <svg width={28} height={27} viewBox="0 0 28 27" fill="#404040">
    <path d="M14 0.5 28 5.2V6.2L14 11 0 6.2V5.2Z" />
    <path d="M0 10.7 14 15.3 28 10.7V14L14 18.8 0 14Z" />
    <path d="M0 18.7 14 23.2 28 18.7V22L14 26.8 0 22Z" />
  </svg>
);

/* ---------- form parts ---------- */

const Select = ({ value, width, square }: { value: string; width: number; square?: boolean }) => (
  <SelectBox $width={width} $square={square}>
    <SelectValue>{value}</SelectValue>
    <SelectArrow />
  </SelectBox>
);

const DateField = ({ label, value, disabled, chart }: { label: string; value: string; disabled?: boolean; chart?: boolean }) => (
  <Field>
    <LabelRow>
      <span>{label}</span>
      {chart && <ChartLink>Date Chart</ChartLink>}
    </LabelRow>
    <TextInput defaultValue={value} disabled={disabled} />
  </Field>
);

export default function App() {
  return (
    <Page>
      <GlobalStyle />
      <Header>
        <Brand>KANU</Brand>
        <LogOut>Log Out</LogOut>
      </Header>
      <TitleBar>Your Dashboard</TitleBar>

      <Filters>
        <Field>
          <LabelRow>Date Range</LabelRow>
          <Select value="Yesterday" width={540} />
        </Field>
        <DateField label="Start Date" value="2017-06-03" disabled />
        <DateField label="End Date" value="2017-06-03" disabled chart />
        <Field>
          <LabelRow>In</LabelRow>
          <TextInput placeholder="All" $tall />
        </Field>
        <Field>
          <LabelRow>Comparison Range</LabelRow>
          <Select value="Custom" width={540} />
        </Field>
        <DateField label="Start Date" value="2016-06-03" />
        <DateField label="End Date" value="2016-06-03" chart />
        <Field>
          <ApplyButton type="button">Apply</ApplyButton>
        </Field>
      </Filters>

      <Tabs>
        <Tab>Snapshot View</Tab>
        <Tab>Trend View</Tab>
        <Tab $active>Map View</Tab>
      </Tabs>

      <Panel>
        <Heading>Revenue By Sales Channel</Heading>
        <SubHeading>Snapshot - 2017-06-03 compared to 2016-06-03</SubHeading>
        <Select value="Select One" width={508} square />
        <SubTabs>
          <SubTab $active>Actuals</SubTab>
          <SubTab>Comparison Actuals</SubTab>
          <SubTab>Variance</SubTab>
        </SubTabs>
        <MapFrame>
          <BaseMap />
          <Control $side="left">
            <ControlButton><Plus /></ControlButton>
            <ControlButton><Minus /></ControlButton>
          </Control>
          <Control $side="right">
            <ControlButton><Layers /></ControlButton>
          </Control>
          <Attribution>
            <AttributionLink $track={0.25}>© Mapbox</AttributionLink>
            <AttributionLink $track={0}>© OpenStreetMap</AttributionLink>
            <AttributionLink $track={-0.2} $bold>Improve this map</AttributionLink>
          </Attribution>
        </MapFrame>
      </Panel>

      <BottomShade />
      <Corner $side="left" />
      <Corner $side="right" />
    </Page>
  );
}
